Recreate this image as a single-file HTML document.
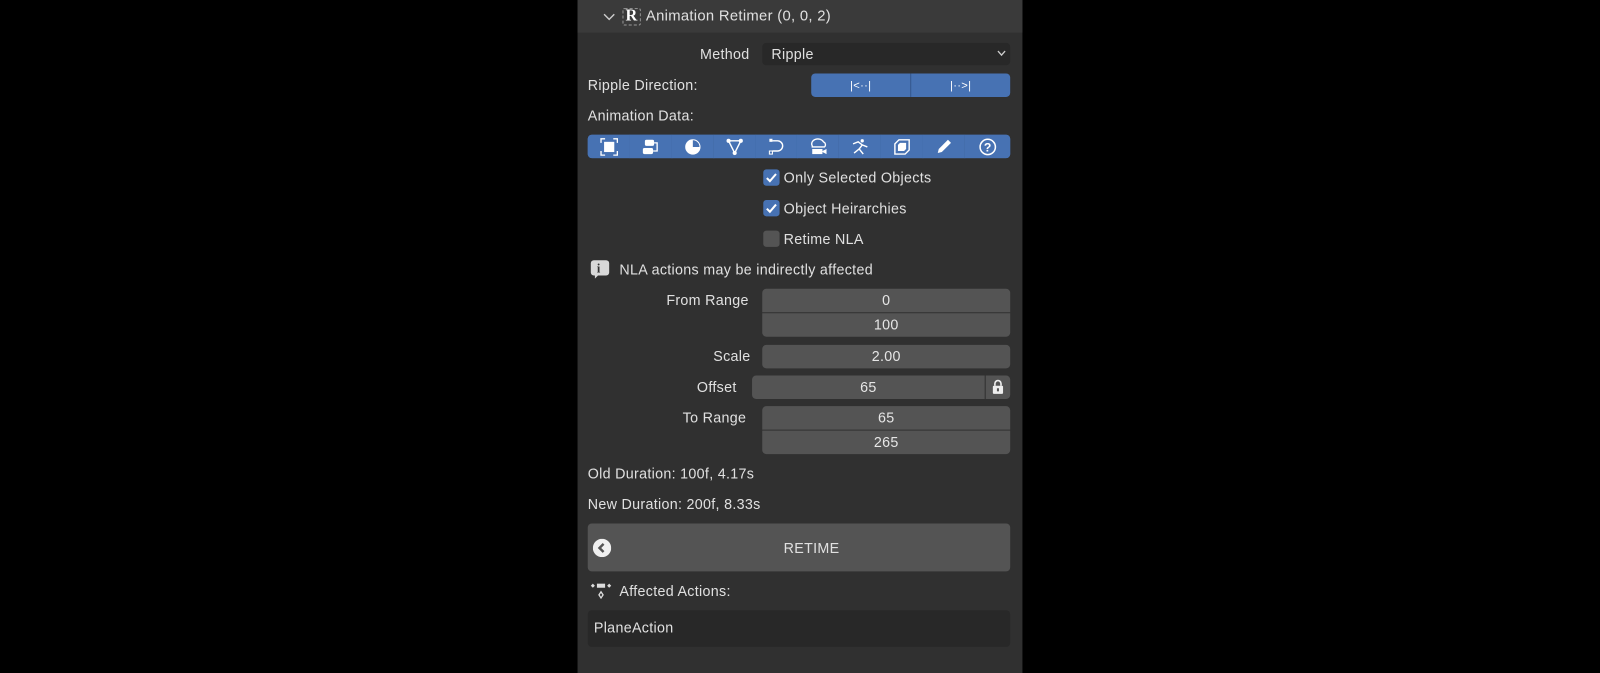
<!DOCTYPE html>
<html><head><meta charset="utf-8"><style>
*{margin:0;padding:0;box-sizing:border-box}
body{width:1600px;height:660px;background:#000;position:relative;overflow:hidden;font-family:"Liberation Sans",sans-serif;font-size:14px;color:#e0e0e0;letter-spacing:0.3px}
#w{position:absolute;left:0;top:0;width:1568px;height:647px;transform:scale(1.0204);transform-origin:0 0}
.a{position:absolute}
.t{position:absolute;line-height:16px;white-space:nowrap}
.f{position:absolute;background:#545454;text-align:center;line-height:23px;color:#e6e6e6}
.cb{position:absolute;width:16px;height:16px;border-radius:3px;background:#4772b3}
.ib{position:absolute;top:132px;height:23px;background:#4772b3;border-right:1px solid #2f4f80}
.ib svg{position:absolute;left:50%;top:50%;transform:translate(-50%,-50%)}
</style></head><body><div id="w">
<div class="a" style="left:566px;top:0;width:436px;height:660px;background:#303030"></div>
<div class="a" style="left:566px;top:0;width:436px;height:32px;background:#3a3a3a"></div>
<svg class="a" style="left:591px;top:11px" width="12" height="10"><path d="M1 3 L6 8 L11 3" stroke="#ccc" stroke-width="1.4" fill="none"/></svg>
<div class="a" style="left:610px;top:8px;width:18px;height:17px;border:1px dashed #999;border-radius:2px"></div>
<div class="t" style="left:613px;top:8px;font-family:'Liberation Serif',serif;font-weight:bold;font-size:16px;color:#fff">R</div>
<div class="t" style="left:633px;top:8px;font-size:14.5px">Animation Retimer (0, 0, 2)</div>

<div class="t" style="left:686px;top:45px">Method</div>
<div class="a" style="left:747px;top:42px;width:243px;height:22px;background:#282828;border-radius:4px"></div>
<div class="t" style="left:756px;top:45px">Ripple</div>
<svg class="a" style="left:977px;top:49px" width="9" height="7"><path d="M1 1 L4.5 5 L8 1" stroke="#ccc" stroke-width="1.3" fill="none"/></svg>

<div class="t" style="left:576px;top:75px">Ripple Direction:</div>
<div class="a" style="left:795px;top:72px;width:195px;height:23px;background:#4772b3;border-radius:4px"></div>
<div class="a" style="left:892px;top:72px;width:1px;height:23px;background:#34578d"></div>
<div class="t" style="left:833px;top:76px;font-size:11px;color:#fff">|&lt;··|</div>
<div class="t" style="left:931px;top:76px;font-size:11px;color:#fff">|··&gt;|</div>

<div class="t" style="left:576px;top:105px">Animation Data:</div>
<div class="a" style="left:576px;top:132px;width:414px;height:23px;background:#4772b3;border-radius:4px;overflow:hidden"></div>
<div class="ib" style="left:576px;width:42px;border-radius:4px 0 0 4px"><svg width="18" height="18"><path d="M1 5V1H5M13 1H17V5M17 13V17H13M5 17H1V13" stroke="#fff" fill="none" stroke-width="1.3"/><rect x="4" y="4" width="10" height="10" fill="#fff"/></svg></div>
<div class="ib" style="left:617px;width:42px"><svg width="18" height="18"><rect x="3" y="2" width="9" height="6" rx="1.5" fill="#fff"/><rect x="1" y="10" width="10" height="6" rx="1.5" fill="#fff"/><path d="M12 5H15V13H11" stroke="#fff" fill="none" stroke-width="1.3"/></svg></div>
<div class="ib" style="left:658px;width:42px"><svg width="18" height="18"><circle cx="9" cy="9" r="7.5" fill="#fff"/><path d="M9 9V2.5A6.5 6.5 0 0 1 15.5 9Z" fill="#4772b3"/></svg></div>
<div class="ib" style="left:699px;width:42px"><svg width="18" height="18"><path d="M3 3H15L9 15Z" stroke="#fff" fill="none" stroke-width="1.4"/><circle cx="3" cy="3" r="2" fill="#fff"/><circle cx="15" cy="3" r="2" fill="#fff"/><circle cx="9" cy="15" r="2" fill="#fff"/></svg></div>
<div class="ib" style="left:740px;width:42px"><svg width="18" height="18"><path d="M5 3H10A5 5 0 0 1 10 13H5" stroke="#fff" fill="none" stroke-width="1.4"/><rect x="2" y="1" width="3" height="3" fill="#fff"/><rect x="2" y="13" width="3" height="3" stroke="#fff" fill="none"/></svg></div>
<div class="ib" style="left:781px;width:42px"><svg width="20" height="18"><path d="M4 8A5 4 0 0 1 15 4A3 3 0 0 1 16 9H4Z" stroke="#fff" fill="none" stroke-width="1.3"/><rect x="4" y="11" width="10" height="5" fill="#fff"/><path d="M14 13L18 11V16L14 14" fill="#fff"/></svg></div>
<div class="ib" style="left:822px;width:42px"><svg width="18" height="18"><circle cx="11" cy="3" r="1.6" fill="#fff"/><path d="M2 6L7 4L11 7L16 9M11 7L8 11L12 16M8 11L3 15" stroke="#fff" fill="none" stroke-width="1.4"/></svg></div>
<div class="ib" style="left:863px;width:42px"><svg width="18" height="18"><path d="M2 6L6 2H16V12L12 16H2Z" stroke="#fff" fill="none" stroke-width="1.4"/><path d="M5 7L7 5H13V11L11 13H5Z" fill="#fff"/></svg></div>
<div class="ib" style="left:904px;width:42px"><svg width="18" height="18"><path d="M3 15L4 11L13 2L16 5L7 14Z" fill="#fff"/></svg></div>
<div class="ib" style="left:945px;width:45px;border:none;border-radius:0 4px 4px 0"><svg width="18" height="18"><circle cx="9" cy="9" r="7.5" stroke="#fff" fill="none" stroke-width="1.5"/><text x="9" y="13.5" text-anchor="middle" font-family="Liberation Sans" font-weight="bold" font-size="12" fill="#fff">?</text></svg></div>

<div class="cb" style="left:748px;top:166px"></div><svg class="a" style="left:748px;top:166px" width="16" height="16"><path d="M3.5 8.5L6.5 11.5L12.5 4.5" stroke="#fff" stroke-width="2" fill="none"/></svg>
<div class="t" style="left:768px;top:166px">Only Selected Objects</div>
<div class="cb" style="left:748px;top:196px"></div><svg class="a" style="left:748px;top:196px" width="16" height="16"><path d="M3.5 8.5L6.5 11.5L12.5 4.5" stroke="#fff" stroke-width="2" fill="none"/></svg>
<div class="t" style="left:768px;top:196px">Object Heirarchies</div>
<div class="cb" style="left:748px;top:226px;background:#545454"></div>
<div class="t" style="left:768px;top:226px">Retime NLA</div>

<div class="a" style="left:579px;top:255px;width:18px;height:15px;background:#d8d8d8;border-radius:3px"></div>
<div class="a" style="left:583px;top:269px;width:0;height:0;border-left:4px solid #d8d8d8;border-bottom:4px solid transparent"></div>
<div class="t" style="left:585px;top:255px;font-weight:bold;font-size:12px;color:#303030;font-family:'Liberation Serif',serif">i</div>
<div class="t" style="left:607px;top:256px">NLA actions may be indirectly affected</div>

<div class="t" style="left:653px;top:286px">From Range</div>
<div class="f" style="left:747px;top:283px;width:243px;height:23px;border-radius:4px 4px 0 0">0</div>
<div class="f" style="left:747px;top:307px;width:243px;height:23px;border-radius:0 0 4px 4px">100</div>
<div class="t" style="left:699px;top:341px">Scale</div>
<div class="f" style="left:747px;top:338px;width:243px;height:23px;border-radius:4px">2.00</div>
<div class="t" style="left:683px;top:371px">Offset</div>
<div class="f" style="left:737px;top:368px;width:228px;height:23px;border-radius:4px 0 0 4px">65</div>
<div class="f" style="left:966px;top:368px;width:24px;height:23px;border-radius:0 4px 4px 0"></div>
<svg class="a" style="left:971px;top:371px" width="14" height="16"><path d="M4 7V5A3 3 0 0 1 10 5V7" stroke="#eee" stroke-width="1.6" fill="none"/><rect x="2" y="7" width="10" height="8" rx="1" fill="#eee"/><rect x="6" y="9.5" width="2" height="3" fill="#545454"/></svg>
<div class="t" style="left:669px;top:401px">To Range</div>
<div class="f" style="left:747px;top:398px;width:243px;height:23px;border-radius:4px 4px 0 0">65</div>
<div class="f" style="left:747px;top:422px;width:243px;height:23px;border-radius:0 0 4px 4px">265</div>

<div class="t" style="left:576px;top:456px">Old Duration: 100f, 4.17s</div>
<div class="t" style="left:576px;top:486px">New Duration: 200f, 8.33s</div>

<div class="a" style="left:576px;top:513px;width:414px;height:47px;background:#545454;border-radius:4px"></div>
<svg class="a" style="left:581px;top:528px" width="18" height="18"><circle cx="9" cy="9" r="9" fill="#f0f0f0"/><path d="M10.5 5L6.5 9L10.5 13" stroke="#545454" stroke-width="2.4" fill="none"/></svg>
<div class="t" style="left:768px;top:529px">RETIME</div>

<svg class="a" style="left:578px;top:570px" width="22" height="20"><path d="M1 4L3 2L5 4L3 6Z M17 4L19 2L21 4L19 6Z" fill="#ddd"/><rect x="7" y="2" width="8" height="4" fill="#ddd"/><path d="M9 13L11 10L13 13L11 16Z" stroke="#ddd" stroke-width="1.3" fill="none"/></svg>
<div class="t" style="left:607px;top:571px">Affected Actions:</div>
<div class="a" style="left:576px;top:598px;width:414px;height:36px;background:#282828;border-radius:4px"></div>
<div class="t" style="left:582px;top:607px">PlaneAction</div>
</div></body></html>
